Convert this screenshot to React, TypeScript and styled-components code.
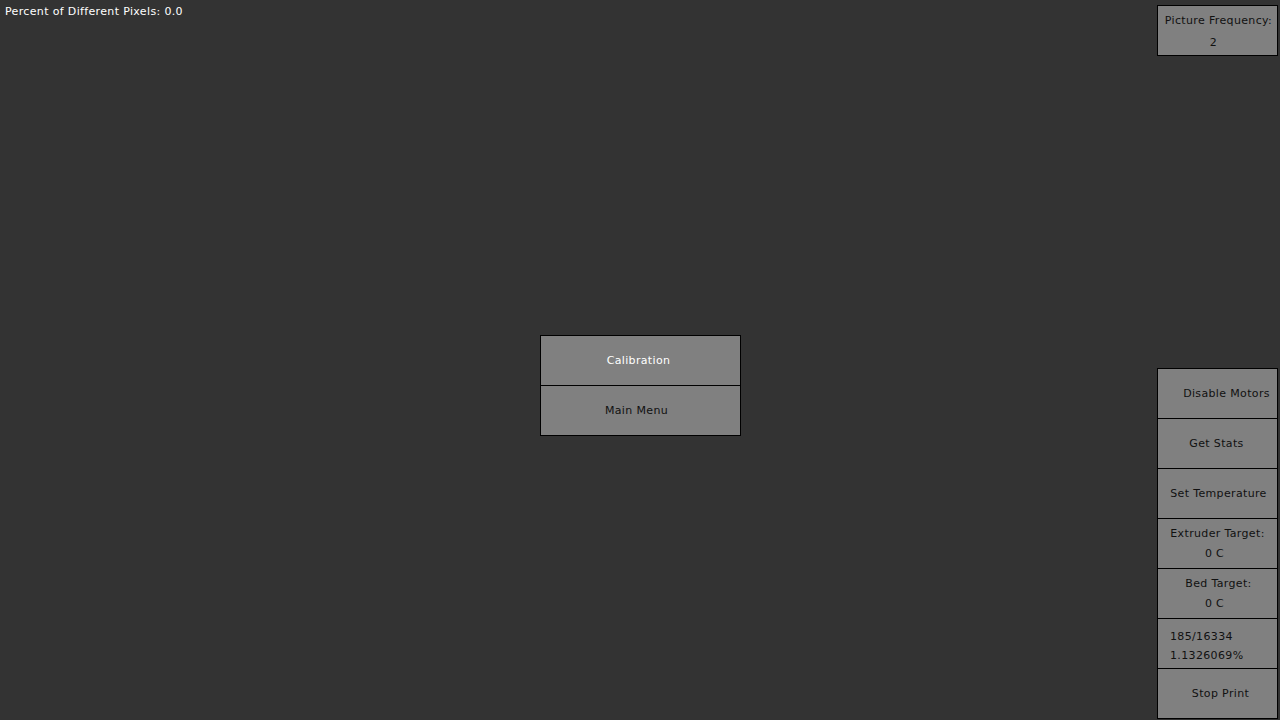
import React from "react";
import styled, { createGlobalStyle } from "styled-components";

const GlobalStyle = createGlobalStyle`
  html, body {
    margin: 0;
    padding: 0;
    background: #333333;
    overflow: hidden;
  }
  body {
    font-family: "DejaVu Sans", "Liberation Sans", sans-serif;
    font-size: 11px;
    letter-spacing: 0.35px;
  }
`;

const Screen = styled.div`
  width: 1280px;
  height: 720px;
  display: flex;
  color: #111;
`;

const Main = styled.div`
  flex: 1;
  display: flex;
  flex-direction: column;
`;

const Status = styled.div`
  color: #ffffff;
  padding: 4px 0 0 5px;
  height: 15px;
  line-height: 16px;
`;

const CenterStack = styled.div`
  margin: 316px 0 0 540px;
  display: flex;
  flex-direction: column;
`;

const Side = styled.div`
  width: 121px;
  margin-right: 2px;
  padding: 5px 0 1px;
  display: flex;
  flex-direction: column;
  justify-content: space-between;
`;

const Stack = styled.div`
  display: flex;
  flex-direction: column;
`;

const Box = styled.div<{ $w?: number; $light?: boolean; $left?: boolean; $pt?: number; $lh?: number }>`
  box-sizing: border-box;
  width: ${({ $w }) => $w ?? 121}px;
  height: 51px;
  background: #808080;
  border: 1px solid #000;
  color: ${({ $light }) => ($light ? "#ffffff" : "#111111")};
  display: flex;
  flex-direction: column;
  justify-content: center;
  align-items: ${({ $left }) => ($left ? "flex-start" : "center")};
  padding-left: ${({ $left }) => ($left ? 12 : 0)}px;
  padding-top: ${({ $pt }) => $pt ?? 0}px;
  line-height: ${({ $lh }) => $lh ?? 21}px;
  & + & {
    margin-top: -1px;
  }
`;

const Line = styled.span<{ $shift?: number }>`
  display: block;
  position: relative;
  left: ${({ $shift }) => $shift ?? 0}px;
`;

export default function App() {
  return (
    <>
      <GlobalStyle />
      <Screen>
        <Main>
          <Status>Percent of Different Pixels: 0.0</Status>
          <CenterStack>
            <Box $w={201} $light>
              <Line $shift={-2}>Calibration</Line>
            </Box>
            <Box $w={201}>
              <Line $shift={-4}>Main Menu</Line>
            </Box>
          </CenterStack>
        </Main>
        <Side>
          <Box $pt={3} $lh={22}>
            <Line $shift={1}>Picture Frequency:</Line>
            <Line $shift={-4}>2</Line>
          </Box>
          <Stack>
            <Box>
              <Line $shift={9}>Disable Motors</Line>
            </Box>
            <Box>
              <Line $shift={-1}>Get Stats</Line>
            </Box>
            <Box>
              <Line $shift={1}>Set Temperature</Line>
            </Box>
            <Box $lh={20} $pt={-1}>
              <Line>Extruder Target:</Line>
              <Line $shift={-3}>0 C</Line>
            </Box>
            <Box $lh={20} $pt={-1}>
              <Line $shift={1}>Bed Target:</Line>
              <Line $shift={-3}>0 C</Line>
            </Box>
            <Box $left $pt={4} $lh={19}>
              <Line>185/16334</Line>
              <Line>1.1326069%</Line>
            </Box>
            <Box>
              <Line $shift={3}>Stop Print</Line>
            </Box>
          </Stack>
        </Side>
      </Screen>
    </>
  );
}
